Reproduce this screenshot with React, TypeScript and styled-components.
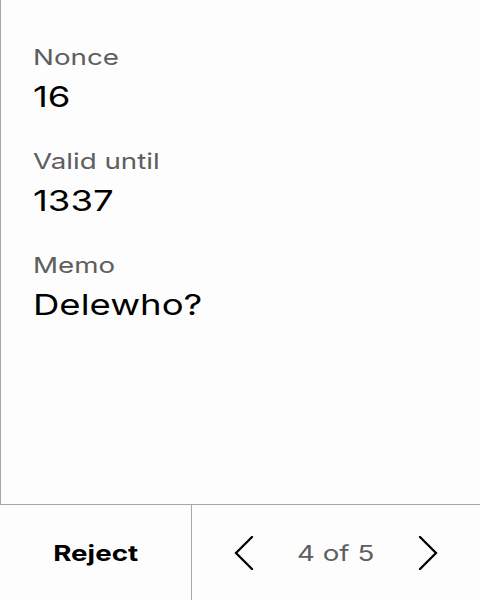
import React from "react";
import styled, { createGlobalStyle } from "styled-components";

const Global = createGlobalStyle`
  html, body { margin: 0; padding: 0; background: #fdfdfd; }
  body { font-family: Inter, "Noto Sans", sans-serif; }
  * { box-sizing: border-box; }
`;

const Page = styled.div`
  display: flex;
  flex-direction: column;
  height: 600px;
  width: 480px;
  background: #fdfdfd;
`;

const Content = styled.div`
  flex: 1;
  display: flex;
  flex-direction: column;
  align-items: flex-start;
  gap: 28px;
  padding: 41px 32px 0 32px;
  border-left: 1px solid #a8a8a8;
  border-bottom: 1px solid #a8a8a8;
`;

const Field = styled.div`
  display: flex;
  flex-direction: column;
  align-items: flex-start;
  gap: 4px;
`;

/* the design is drawn with horizontally widened lettering */
const Wide = styled.span<{ $origin?: string }>`
  display: inline-block;
  transform: scaleX(1.26);
  transform-origin: ${(p) => p.$origin ?? "left center"};
`;

const Label = styled(Wide)`
  font-size: 22px;
  line-height: 32px;
  color: #5e5e5e;
`;

const Value = styled(Wide)`
  font-size: 29px;
  line-height: 40px;
  color: #000;
`;

const Footer = styled.div`
  height: 95px;
  display: grid;
  grid-template-columns: 192px 1fr;
`;

const RejectButton = styled.button`
  border: none;
  border-right: 1px solid #a8a8a8;
  background: transparent;
  font-family: inherit;
  font-size: 22px;
  font-weight: 700;
  color: #000;
  padding: 0;
`;

const Pager = styled.div`
  display: flex;
  align-items: center;
  justify-content: space-between;
  padding: 0 32px;
`;

const NavButton = styled.button`
  width: 40px;
  height: 40px;
  border: none;
  background: transparent;
  padding: 0;
  display: flex;
  align-items: center;
  justify-content: center;
`;

const Count = styled(Wide)`
  font-size: 22px;
  color: #5e5e5e;
`;

const Chevron = ({ dir }: { dir: "left" | "right" }) => (
  <svg width="20" height="34" viewBox="0 0 20 34" fill="none">
    <path
      d={dir === "left" ? "M18 1 L2 17 L18 33" : "M2 1 L18 17 L2 33"}
      stroke="#000"
      strokeWidth="2.3"
      strokeLinecap="round"
      strokeLinejoin="miter"
    />
  </svg>
);

const fields = [
  { label: "Nonce", value: "16" },
  { label: "Valid until", value: "1337" },
  { label: "Memo", value: "Delewho?" },
];

export default function App() {
  return (
    <>
      <Global />
      <Page>
        <Content>
          {fields.map((f) => (
            <Field key={f.label}>
              <Label>{f.label}</Label>
              <Value>{f.value}</Value>
            </Field>
          ))}
        </Content>
        <Footer>
          <RejectButton>
            <Wide $origin="center">Reject</Wide>
          </RejectButton>
          <Pager>
            <NavButton aria-label="Previous">
              <Chevron dir="left" />
            </NavButton>
            <Count $origin="center">4 of 5</Count>
            <NavButton aria-label="Next">
              <Chevron dir="right" />
            </NavButton>
          </Pager>
        </Footer>
      </Page>
    </>
  );
}
